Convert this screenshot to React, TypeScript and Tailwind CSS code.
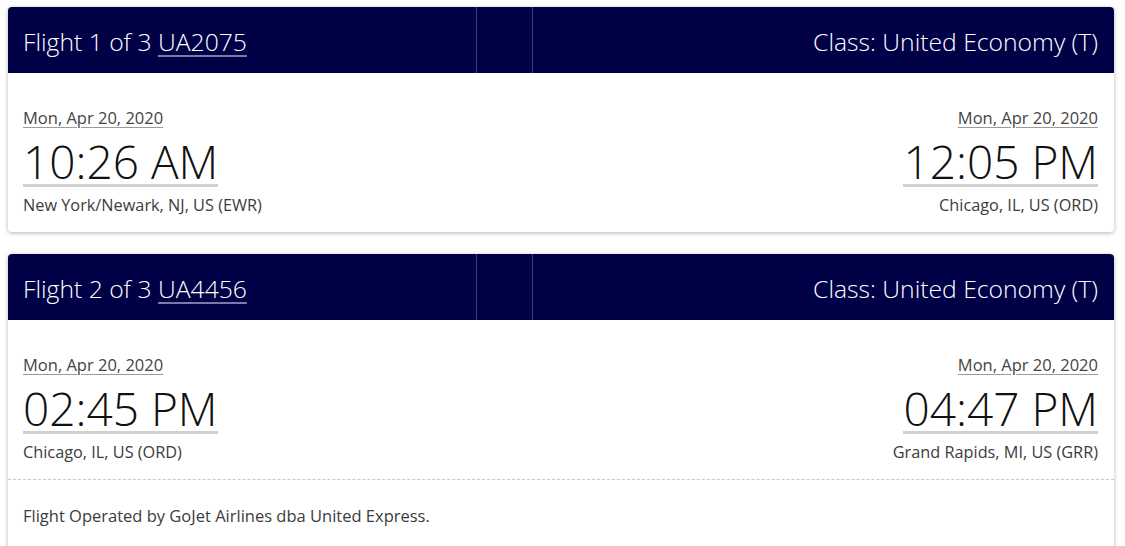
import React from "react";

type Leg = {
  date: string;
  time: string;
  place: string;
};

type Flight = {
  index: number;
  number: string;
  cabin: string;
  from: Leg;
  to: Leg;
  operator?: string;
};

const flights: Flight[] = [
  {
    index: 1,
    number: "UA2075",
    cabin: "United Economy (T)",
    from: { date: "Mon, Apr 20, 2020", time: "10:26 AM", place: "New York/Newark, NJ, US (EWR)" },
    to: { date: "Mon, Apr 20, 2020", time: "12:05 PM", place: "Chicago, IL, US (ORD)" },
  },
  {
    index: 2,
    number: "UA4456",
    cabin: "United Economy (T)",
    from: { date: "Mon, Apr 20, 2020", time: "02:45 PM", place: "Chicago, IL, US (ORD)" },
    to: { date: "Mon, Apr 20, 2020", time: "04:47 PM", place: "Grand Rapids, MI, US (GRR)" },
    operator: "Flight Operated by GoJet Airlines dba United Express.",
  },
];

function Endpoint({ leg, right }: { leg: Leg; right?: boolean }) {
  return (
    <div className={right ? "flex flex-col items-end" : "flex flex-col items-start"}>
      <span className="text-[16.5px] leading-[20px] text-[#444] underline decoration-[#9a9a9a] underline-offset-[3px]">
        {leg.date}
      </span>
      <span className="mt-[10px] text-[46px] leading-[46px] font-light text-[#111] border-b-[3px] border-[#d0d0d0]">
        {leg.time}
      </span>
      <span className="mt-[8px] text-[16.3px] leading-[20px] text-[#3c3c3c]">{leg.place}</span>
    </div>
  );
}

function FlightCard({ flight }: { flight: Flight }) {
  return (
    <div className="bg-white rounded-[4px] shadow-[0_1px_4px_rgba(0,0,0,0.3)] overflow-hidden">
      <div className="grid grid-cols-[468px_57px_1fr] h-[66px] bg-[#000046] text-white">
        <div className="flex items-center pl-[15px] pt-[3px] text-[24.7px] font-light">
          <span>
            Flight {flight.index} of 3{" "}
            <span className="underline decoration-[#7a7aa8] underline-offset-[4px]">{flight.number}</span>
          </span>
        </div>
        <div className="border-l border-r border-[#3c3c78]" />
        <div className="flex items-center justify-end pr-4 pt-[3px] text-[24.7px] font-light">
          Class: {flight.cabin}
        </div>
      </div>
      <div className="flex justify-between pl-[15px] pr-4 pt-[35px] pb-[17px]">
        <Endpoint leg={flight.from} />
        <Endpoint leg={flight.to} right />
      </div>
      {flight.operator && (
        <div className="border-t border-dashed border-[#c8c8c8] pl-[15px] pr-4 pt-[26px] pb-[30px] text-[16.5px] leading-[20px] text-[#3c3c3c]">
          {flight.operator}
        </div>
      )}
    </div>
  );
}

export default function App() {
  return (
    <div className="min-h-screen bg-white px-[8px] pt-[7px] font-['Open_Sans',sans-serif] mr-[3px]">
      <div className="flex flex-col gap-[22px]">
        {flights.map((f) => (
          <FlightCard key={f.number} flight={f} />
        ))}
      </div>
    </div>
  );
}
